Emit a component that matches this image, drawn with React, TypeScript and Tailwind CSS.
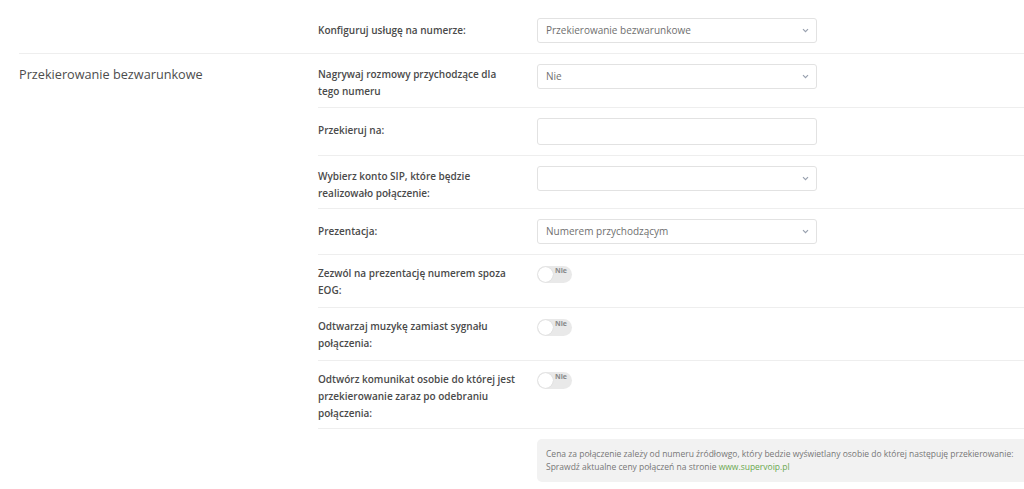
import React from 'react';

const font = { fontFamily: '"Open Sans", "Noto Sans", sans-serif' };

const Chevron = () => (
  <svg width="7" height="5" viewBox="0 0 7 5" className="text-gray-400">
    <path d="M1 1.2l2.5 2.5 2.5-2.5" fill="none" stroke="currentColor" strokeWidth="1.2" />
  </svg>
);

const Select: React.FC<{ value?: string }> = ({ value }) => (
  <div className="w-[280px] h-[25px] border border-[#e2e2e2] rounded-[3px] bg-white flex items-center justify-between pl-[8px] pr-[7px] text-[10px] text-[#6f6f6f]">
    <span>{value}</span>
    <Chevron />
  </div>
);

const Toggle = () => (
  <div className="relative w-[35px] h-[17px] rounded-full bg-[#e9e9e9]">
    <div className="absolute left-[1px] top-[1px] w-[15px] h-[15px] rounded-full bg-white shadow-[0_0_1px_rgba(0,0,0,0.2)]" />
    <span className="absolute right-[5px] top-[0px] text-[7px] font-bold text-[#888]">Nie</span>
  </div>
);

const Row: React.FC<{ label: React.ReactNode; children: React.ReactNode; h: string; pt?: string; cpt?: string }> = ({ label, children, h, pt, cpt }) => (
  <div className={`flex border-b border-[#eeeeee] ${h}`}>
    <div className={`w-[219px] pr-[10px] text-[10px] leading-[17px] font-semibold text-[#4a4a4a] whitespace-nowrap ${pt ?? 'pt-[10px]'}`}>{label}</div>
    <div className={cpt ?? 'pt-[10px]'}>{children}</div>
  </div>
);

export default function App() {
  return (
    <div className="w-[1024px] h-[489px] overflow-hidden bg-white pl-[19px]" style={font}>
      <div className="flex border-b border-[#eeeeee] h-[54px] items-center pt-[8px]">
        <div className="w-[299px]" />
        <div className="w-[219px] text-[10px] font-semibold text-[#4a4a4a]">Konfiguruj usługę na numerze:</div>
        <Select value="Przekierowanie bezwarunkowe" />
      </div>
      <div className="flex">
        <div className="w-[299px] pt-[11px] text-[12.7px] font-medium text-[#4d4d4d]">Przekierowanie bezwarunkowe</div>
        <div className="flex-1">
          <Row h="h-[54px]" pt="pt-[12px]" label={<>Nagrywaj rozmowy przychodzące dla<br />tego numeru</>}>
            <Select value="Nie" />
          </Row>
          <Row h="h-[48px]" pt="pt-[14px]" label="Przekieruj na:">
            <div className="w-[280px] h-[27px] border border-[#e2e2e2] rounded-[3px] bg-white" />
          </Row>
          <Row h="h-[53px]" pt="pt-[12px]" label={<>Wybierz konto SIP, które będzie<br />realizowało połączenie:</>}>
            <Select />
          </Row>
          <Row h="h-[46px]" pt="pt-[14px]" label="Prezentacja:">
            <Select value="Numerem przychodzącym" />
          </Row>
          <Row h="h-[53px]" pt="pt-[10px]" cpt="pt-[11px]" label={<>Zezwól na prezentację numerem spoza<br />EOG:</>}>
            <Toggle />
          </Row>
          <Row h="h-[53px]" pt="pt-[10px]" cpt="pt-[11px]" label={<>Odtwarzaj muzykę zamiast sygnału<br />połączenia:</>}>
            <Toggle />
          </Row>
          <Row h="h-[68px]" pt="pt-[10px]" cpt="pt-[11px]" label={<>Odtwórz komunikat osobie do której jest<br />przekierowanie zaraz po odebraniu<br />połączenia:</>}>
            <Toggle />
          </Row>
          <div className="flex pt-[10px]">
            <div className="w-[219px]" />
            <div className="flex-1 bg-[#f2f2f2] rounded-l-[5px] h-[43px] pl-[9px] pt-[8px] text-[8.5px] leading-[13px] text-[#777] whitespace-nowrap">
              Cena za połączenie zależy od numeru źródłowgo, który bedzie wyświetlany osobie do której następuję przekierowanie:<br />
              Sprawdź aktualne ceny połączeń na stronie <span className="text-[#6aa84f]">www.supervoip.pl</span>
            </div>
          </div>
        </div>
      </div>
    </div>
  );
}
